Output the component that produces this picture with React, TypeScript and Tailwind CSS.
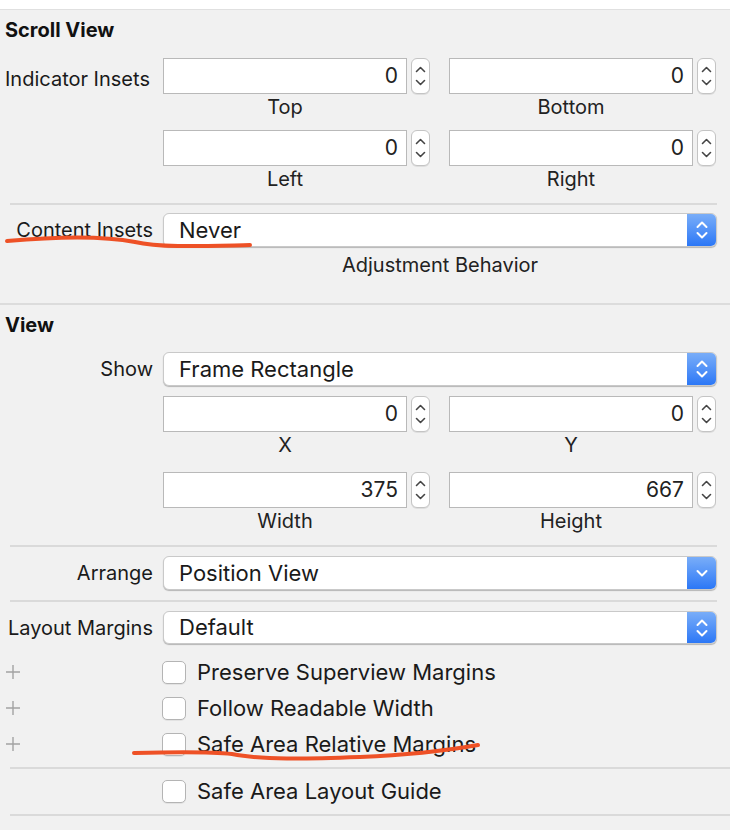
const font = { fontFamily: '"Inter", "Liberation Sans", sans-serif' };

function Stepper() {
  return (
    <div className="w-[19px] h-[36px] rounded-[6px] border border-[#c4c4c4] bg-white flex items-center justify-center shadow-[0_1px_0_rgba(0,0,0,0.08)]">
      <svg width="11" height="26" viewBox="0 0 11 26" fill="none" stroke="#444" strokeWidth="1.6" strokeLinecap="round" strokeLinejoin="round">
        <path d="M1.5 8.5 L5.5 4.5 L9.5 8.5" />
        <path d="M1.5 17.5 L5.5 21.5 L9.5 17.5" />
      </svg>
    </div>
  );
}

function NumField({ value }: { value: string }) {
  return (
    <div className="flex items-center gap-[4px]">
      <div className="w-[244px] h-[36px] bg-white border border-[#b9b9b9] flex items-center justify-end pr-[8px] text-[21px] text-[#222]">
        {value}
      </div>
      <Stepper />
    </div>
  );
}

function FieldPair({ a, b, la, lb }: { a: string; b: string; la: string; lb: string }) {
  return (
    <div className="flex pl-[163px]">
      <div className="flex flex-col items-start">
        <NumField value={a} />
        <div className="w-[244px] text-center text-[20px] text-[#222] leading-[24px] mt-[1px]">{la}</div>
      </div>
      <div className="flex flex-col items-start ml-[19px]">
        <NumField value={b} />
        <div className="w-[244px] text-center text-[20px] text-[#222] leading-[24px] mt-[1px]">{lb}</div>
      </div>
    </div>
  );
}

function Popup({ label, value, single, h = 34 }: { label: string; value: string; single?: boolean; h?: number }) {
  return (
    <div className="flex items-center">
      <div className="w-[163px] pr-[10px] text-right text-[20px] text-[#1a1a1a] whitespace-nowrap">{label}</div>
      <div
        className="w-[554px] flex bg-white rounded-[6px] border border-[#c9c9c9] shadow-[0_1px_1px_rgba(0,0,0,0.25)] overflow-hidden"
        style={{ height: h }}
      >
        <div className="flex-1 flex items-center pl-[15px] text-[22px] text-[#1a1a1a]">{value}</div>
        <div className="w-[29px] bg-gradient-to-b from-[#79adf8] to-[#2b77f6] flex items-center justify-center">
          <svg width="14" height="24" viewBox="0 0 14 24" fill="none" stroke="white" strokeWidth="2" strokeLinecap="round" strokeLinejoin="round">
            {single ? (
              <path d="M2.5 10 L7 14.5 L11.5 10" />
            ) : (
              <>
                <path d="M2.5 9 L7 4.5 L11.5 9" />
                <path d="M2.5 15 L7 19.5 L11.5 15" />
              </>
            )}
          </svg>
        </div>
      </div>
    </div>
  );
}

function Check({ label, plus }: { label: string; plus?: boolean }) {
  return (
    <div className="flex items-center h-[24px]">
      <div className="w-[162px] pl-[5px] text-[#a0a0a0]">
        {plus && (
          <svg width="16" height="16" viewBox="0 0 16 16" stroke="#a3a3a3" strokeWidth="1.4">
            <path d="M8 1 V15 M1 8 H15" />
          </svg>
        )}
      </div>
      <div className="w-[24px] h-[23px] rounded-[5px] border border-[#b4b4b4] bg-white shadow-[0_1px_0_rgba(0,0,0,0.06)]" />
      <span className="ml-[11px] text-[22px] text-[#1a1a1a]">{label}</span>
    </div>
  );
}

function Divider() {
  return <div className="ml-[10px] w-[707px] h-[2px] bg-[#dadada]" />;
}

export default function App() {
  return (
    <div className="relative w-[730px] h-[830px] bg-[#f1f1f1] overflow-hidden" style={font}>
      <div className="h-[10px] bg-white border-b border-[#e0e0e0]" />

      {/* Scroll View */}
      <div className="pl-[5px] pt-[8px] text-[20px] font-bold text-[#111] leading-[24px]">Scroll View</div>

      <div className="mt-[16px] relative">
        <div className="absolute left-[5px] top-[6px] text-[20px] text-[#1a1a1a]">Indicator Insets</div>
        <FieldPair a="0" b="0" la="Top" lb="Bottom" />
      </div>
      <div className="mt-[11px]">
        <FieldPair a="0" b="0" la="Left" lb="Right" />
      </div>

      <div className="mt-[12px]">
        <Divider />
      </div>

      <div className="mt-[8px]">
        <Popup label="Content Insets" value="Never" />
      </div>
      <div className="pl-[163px] w-[717px] text-center text-[20px] text-[#222] leading-[24px] mt-[6px]">
        Adjustment Behavior
      </div>

      <div className="mt-[26px] h-[2px] bg-[#dcdcdc]" />

      {/* View */}
      <div className="pl-[5px] pt-[8px] text-[20px] font-bold text-[#111] leading-[24px]">View</div>

      <div className="mt-[15px]">
        <Popup label="Show" value="Frame Rectangle" />
      </div>
      <div className="mt-[10px]">
        <FieldPair a="0" b="0" la="X" lb="Y" />
      </div>
      <div className="mt-[15px]">
        <FieldPair a="375" b="667" la="Width" lb="Height" />
      </div>

      <div className="mt-[12px]">
        <Divider />
      </div>
      <div className="mt-[9px]">
        <Popup label="Arrange" value="Position View" single />
      </div>
      <div className="mt-[10px]">
        <Divider />
      </div>
      <div className="mt-[9px]">
        <Popup label="Layout Margins" value="Default" h={33} />
      </div>

      <div className="mt-[16px] flex flex-col gap-[12px]">
        <Check label="Preserve Superview Margins" plus />
        <Check label="Follow Readable Width" plus />
        <Check label="Safe Area Relative Margins" plus />
      </div>
      <div className="mt-[11px] h-[2px] ml-[10px] bg-[#dadada]" />
      <div className="mt-[10px]">
        <Check label="Safe Area Layout Guide" />
      </div>
      <div className="mt-[11px] h-[2px] ml-[10px] bg-[#dadada]" />

      {/* annotations */}
      <svg className="absolute left-0 top-0 pointer-events-none" width="730" height="830" fill="none" stroke="#ee5126" strokeWidth="4" strokeLinecap="round">
        <path d="M7 241 C 40 238, 95 234, 135 242 C 160 248, 205 246, 250 245" />
        <path d="M134 753 C 170 752, 205 751, 232 754 C 262 760, 305 759, 360 757 C 410 755, 450 750, 478 745" />
      </svg>
    </div>
  );
}
